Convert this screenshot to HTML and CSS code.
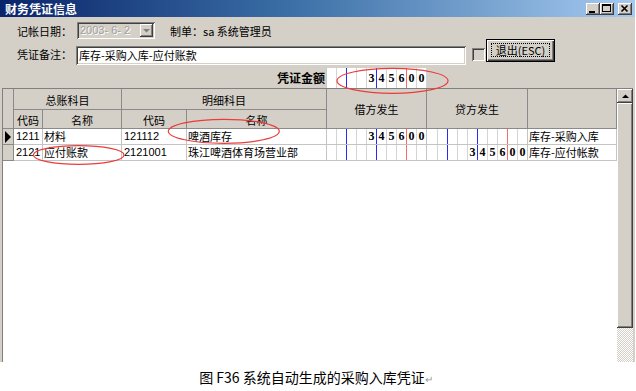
FILE: index.html
```html
<!DOCTYPE html>
<html lang="zh-CN">
<head>
<meta charset="utf-8">
<title>财务凭证信息</title>
<link rel="stylesheet" href="styles.css">
</head>
<body>
<div class="page">
  <div class="window">
    <div class="titlebar">
      <span class="title">财务凭证信息</span>
      <div class="tbtns">
        <span class="tbtn"><svg width="14" height="12" viewBox="0 0 14 12"><rect x="3" y="8" width="6" height="2" fill="#000"/></svg></span>
        <span class="tbtn"><svg width="14" height="12" viewBox="0 0 14 12"><rect x="2.5" y="1.5" width="8" height="7" fill="none" stroke="#000"/><rect x="2" y="1" width="9" height="2" fill="#000"/></svg></span>
        <span class="tbtn close"><svg width="14" height="12" viewBox="0 0 14 12"><path d="M3.5 2.5 L9.5 8.5 M9.5 2.5 L3.5 8.5" stroke="#000" stroke-width="1.6"/></svg></span>
      </div>
    </div>

    <div class="form">
      <div class="row r1">
        <span class="label">记帐日期：</span>
        <div class="combo">
          <span class="combo-text">2003- 6- 2</span>
          <span class="combo-btn"><svg width="7" height="4" viewBox="0 0 7 4"><polygon points="0,0 7,0 3.5,3.5" fill="#808080"/></svg></span>
        </div>
        <span class="maker">制单：sa 系统管理员</span>
      </div>
      <div class="row r2">
        <span class="label">凭证备注：</span>
        <div class="input">库存-采购入库-应付账款</div>
        <span class="check"></span>
        <div class="btn"><span class="focus">退出(ESC)</span></div>
      </div>
      <div class="row r3">
        <span class="amount-label">凭证金额</span>
        <div class="amount">
          <span class="s"></span><span class="s b"></span><span class="s"></span><span class="s"></span><span class="s b">3</span><span class="s">4</span><span class="s">5</span><span class="s r">6</span><span class="s">0</span><span class="s last">0</span>
        </div>
      </div>
    </div>

    <div class="gridwrap">
      <div class="grid">
        <div class="ghead">
          <div class="hc h-ind"></div>
          <div class="hc h-gl">总账科目</div>
          <div class="hc h-dt">明细科目</div>
          <div class="hc h-dr">借方发生</div>
          <div class="hc h-cr">贷方发生</div>
          <div class="hc h-memo"></div>
          <div class="hc h-c1">代码</div>
          <div class="hc h-n1">名称</div>
          <div class="hc h-c2">代码</div>
          <div class="hc h-n2">名称</div>
        </div>

        <div class="grow">
          <div class="c w-ind ind"><span class="arrow"></span></div>
          <div class="c w-c1 num">1211</div>
          <div class="c w-n1">材料</div>
          <div class="c w-c2 num">121112</div>
          <div class="c w-n2">啤酒库存</div>
          <div class="c w-dr dg">
            <span class="s"></span><span class="s b"></span><span class="s"></span><span class="s"></span><span class="s b">3</span><span class="s">4</span><span class="s">5</span><span class="s r">6</span><span class="s">0</span><span class="s last">0</span>
          </div>
          <div class="c w-cr dg">
            <span class="s first"></span><span class="s b"></span><span class="s"></span><span class="s"></span><span class="s b"></span><span class="s"></span><span class="s"></span><span class="s r"></span><span class="s"></span><span class="s last"></span>
          </div>
          <div class="c w-memo">库存-采购入库</div>
        </div>

        <div class="grow">
          <div class="c w-ind ind"></div>
          <div class="c w-c1 num">2121</div>
          <div class="c w-n1">应付账款</div>
          <div class="c w-c2 num">2121001</div>
          <div class="c w-n2">珠江啤酒体育场营业部</div>
          <div class="c w-dr dg">
            <span class="s"></span><span class="s b"></span><span class="s"></span><span class="s"></span><span class="s b"></span><span class="s"></span><span class="s"></span><span class="s r"></span><span class="s"></span><span class="s last"></span>
          </div>
          <div class="c w-cr dg">
            <span class="s first"></span><span class="s b"></span><span class="s"></span><span class="s"></span><span class="s b">3</span><span class="s">4</span><span class="s">5</span><span class="s r">6</span><span class="s">0</span><span class="s last">0</span>
          </div>
          <div class="c w-memo">库存-应付帐款</div>
        </div>
      </div>

      <div class="vscroll">
        <div class="sb-up"><svg width="7" height="4" viewBox="0 0 7 4"><polygon points="0,4 7,4 3.5,0.5" fill="#000"/></svg></div>
        <div class="sb-thumb"></div>
      </div>
    </div>
  </div>

  <p class="caption">图 F36 系统自动生成的采购入库凭证<span class="ret">↵</span></p>

  <svg class="marks" width="636" height="391" viewBox="0 0 636 391">
    <ellipse cx="392.5" cy="80.8" rx="55.5" ry="12.5" fill="none" stroke="#ec3b3b" stroke-width="1.2"/>
    <ellipse cx="223.8" cy="131.3" rx="55.5" ry="12" fill="none" stroke="#ec3b3b" stroke-width="1.2"/>
    <ellipse cx="78.7" cy="155" rx="45.3" ry="9.3" fill="none" stroke="#ec3b3b" stroke-width="1.2"/>
  </svg>
</div>
</body>
</html>
```

FILE: styles.css
```css
* { box-sizing: border-box; }

html, body {
  margin: 0;
  padding: 0;
  background: #fff;
}

body {
  width: 636px;
  height: 391px;
  overflow: hidden;
  font-family: "Noto Sans CJK SC", "Liberation Sans", sans-serif;
  font-size: 11px;
  color: #000;
}

.page {
  position: relative;
  width: 636px;
  height: 391px;
}

/* ---------- window ---------- */
.window {
  width: 635px;
  height: 362px;
  background: #d4d0c8;
  display: flex;
  flex-direction: column;
  overflow: hidden;
}

.titlebar {
  flex: none;
  height: 17px;
  background: linear-gradient(to right, #0a246a 0%, #3a6ea5 45%, #a6caf0 100%);
  display: flex;
  align-items: center;
  padding-left: 5px;
  padding-right: 3px;
}

.title {
  flex: 1;
  color: #fff;
  font-weight: bold;
  font-size: 12px;
  line-height: 12px;
}

.tbtns {
  display: flex;
}

.tbtn {
  width: 14px;
  height: 12px;
  background: #d4d0c8;
  box-shadow: inset -1px -1px #404040, inset 1px 1px #fff, inset -2px -2px #808080;
  display: flex;
}

.tbtn.close {
  margin-left: 4px;
}

/* ---------- form ---------- */
.form {
  flex: none;
  padding-left: 17px;
}

.row {
  display: flex;
}

.r1 {
  margin-top: 5px;
  height: 17px;
  align-items: center;
}

.label {
  width: 60px;
  line-height: 12px;
  white-space: nowrap;
}

.combo {
  width: 78px;
  height: 17px;
  background: #d4d0c8;
  box-shadow: inset 1px 1px #808080, inset -1px -1px #fff, inset 2px 2px #404040, inset -2px -2px #d4d0c8;
  display: flex;
  align-items: center;
  justify-content: space-between;
  padding: 2px 2px 2px 3px;
}

.combo-text {
  font-family: "Liberation Sans", sans-serif;
  font-size: 11px;
  color: #a0a0a0;
  text-shadow: 1px 1px #fff;
  white-space: pre;
  line-height: 13px;
}

.combo-btn {
  width: 13px;
  height: 13px;
  background: #d4d0c8;
  box-shadow: inset -1px -1px #404040, inset 1px 1px #fff, inset -2px -2px #808080;
  display: flex;
  align-items: center;
  justify-content: center;
}

.maker {
  margin-left: 15px;
  line-height: 12px;
  white-space: nowrap;
}

.r2 {
  height: 26px;
  align-items: flex-start;
}

.r2 .label {
  width: 59px;
  margin-top: 9px;
}

.input {
  width: 390px;
  height: 19px;
  margin-top: 7px;
  background: #fff;
  box-shadow: inset 1px 1px #808080, inset -1px -1px #fff, inset 2px 2px #404040, inset -2px -2px #d4d0c8;
  padding: 2px 3px;
  line-height: 15px;
  white-space: nowrap;
}

.check {
  width: 13px;
  height: 13px;
  margin-top: 9px;
  margin-left: 6px;
  background: #d4d0c8;
  box-shadow: inset 1px 1px #808080, inset -1px -1px #fff, inset 2px 2px #404040, inset -2px -2px #d4d0c8;
}

.btn {
  width: 69px;
  height: 23px;
  margin-left: 1px;
  border: 1px solid #000;
  background: #d4d0c8;
  box-shadow: inset 1px 1px #fff, inset -1px -1px #404040, inset -2px -2px #808080;
  padding: 3px 4px 4px 4px;
  display: flex;
}

.focus {
  flex: 1;
  border: 1px dotted #000;
  display: flex;
  align-items: center;
  justify-content: center;
  font-size: 11px;
  white-space: nowrap;
}

.r3 {
  margin-top: 3px;
  height: 20px;
  align-items: stretch;
}

.amount-label {
  margin-left: 260px;
  width: 49px;
  font-weight: bold;
  font-size: 12px;
  line-height: 20px;
  white-space: nowrap;
}

.amount {
  display: flex;
  background: #fff;
  border-left: 1px solid #c8c8c8;
}

/* digit slots */
.s {
  width: 10px;
  border-right: 1px solid #d4d4d4;
  font-family: "Liberation Serif", serif;
  font-weight: bold;
  font-size: 12px;
  line-height: 15px;
  text-align: center;
}

.amount .s {
  line-height: 20px;
}

.s.b { border-right-color: #2a2af0; }
.s.r { border-right-color: #f56b6b; }
.s.last { width: 9px; border-right: none; }
.amount .s.last { width: 10px; border-right: 1px solid #d4d4d4; }
.s.first { width: 11px; }

/* ---------- grid ---------- */
.gridwrap {
  flex: 1;
  width: 631px;
  margin-left: 2px;
  display: flex;
  border-top: 1px solid #808080;
  border-left: 1px solid #808080;
  min-height: 0;
}

.grid {
  width: 614px;
  background: #fff;
}

.ghead {
  display: grid;
  grid-template-columns: 11px 29px 79px 65px 140px 100px 101px 89px;
  grid-template-rows: 21px 19px;
}

.hc {
  background: #d4d0c8;
  border-right: 1px solid #8a8a8a;
  border-bottom: 1px solid #8a8a8a;
  display: flex;
  align-items: center;
  justify-content: center;
  white-space: nowrap;
  padding-top: 1px;
}

.h-ind  { grid-column: 1; grid-row: 1 / span 2; }
.h-gl   { grid-column: 2 / span 2; grid-row: 1; }
.h-dt   { grid-column: 4 / span 2; grid-row: 1; }
.h-dr   { grid-column: 6; grid-row: 1 / span 2; }
.h-cr   { grid-column: 7; grid-row: 1 / span 2; }
.h-memo { grid-column: 8; grid-row: 1 / span 2; }
.h-c1   { grid-column: 2; grid-row: 2; }
.h-n1   { grid-column: 3; grid-row: 2; }
.h-c2   { grid-column: 4; grid-row: 2; }
.h-n2   { grid-column: 5; grid-row: 2; }

.grow {
  display: flex;
  height: 16px;
}

.c {
  border-right: 1px solid #c4c4c4;
  border-bottom: 1px solid #c4c4c4;
  line-height: 15px;
  padding-left: 1px;
  white-space: nowrap;
  overflow: hidden;
}

.c.num {
  font-family: "Liberation Sans", sans-serif;
  font-size: 11px;
  padding-left: 2px;
}

.w-ind  { width: 11px; }
.w-c1   { width: 29px; }
.w-n1   { width: 79px; }
.w-c2   { width: 65px; }
.w-n2   { width: 140px; }
.w-dr   { width: 100px; }
.w-cr   { width: 101px; }
.w-memo { width: 89px; }

.ind {
  background: #d4d0c8;
  border-right-color: #8a8a8a;
  border-bottom-color: #8a8a8a;
  padding: 0;
  display: flex;
  align-items: center;
  padding-left: 2px;
}

.arrow {
  width: 0;
  height: 0;
  border-left: 6px solid #000;
  border-top: 6px solid transparent;
  border-bottom: 6px solid transparent;
}

.dg {
  display: flex;
  padding-left: 0;
}

/* ---------- scrollbar ---------- */
.vscroll {
  width: 16px;
  display: flex;
  flex-direction: column;
  background: repeating-conic-gradient(#d4d0c8 0 25%, #fff 0 50%) 0 0 / 2px 2px;
}

.sb-up {
  height: 14px;
  background: #d4d0c8;
  box-shadow: inset -1px -1px #404040, inset 1px 1px #fff, inset -2px -2px #808080;
  display: flex;
  align-items: center;
  justify-content: center;
}

.sb-thumb {
  height: 225px;
  background: #d4d0c8;
  box-shadow: inset -1px -1px #404040, inset 1px 1px #fff, inset -2px -2px #808080;
}

/* ---------- caption ---------- */
.caption {
  margin: 7px 0 0 0;
  text-align: center;
  font-size: 14px;
  line-height: 16px;
  padding-right: 4px;
  white-space: nowrap;
}

.ret {
  color: #9a9a9a;
  font-size: 10px;
}

.marks {
  position: absolute;
  left: 0;
  top: 0;
  pointer-events: none;
}
```
